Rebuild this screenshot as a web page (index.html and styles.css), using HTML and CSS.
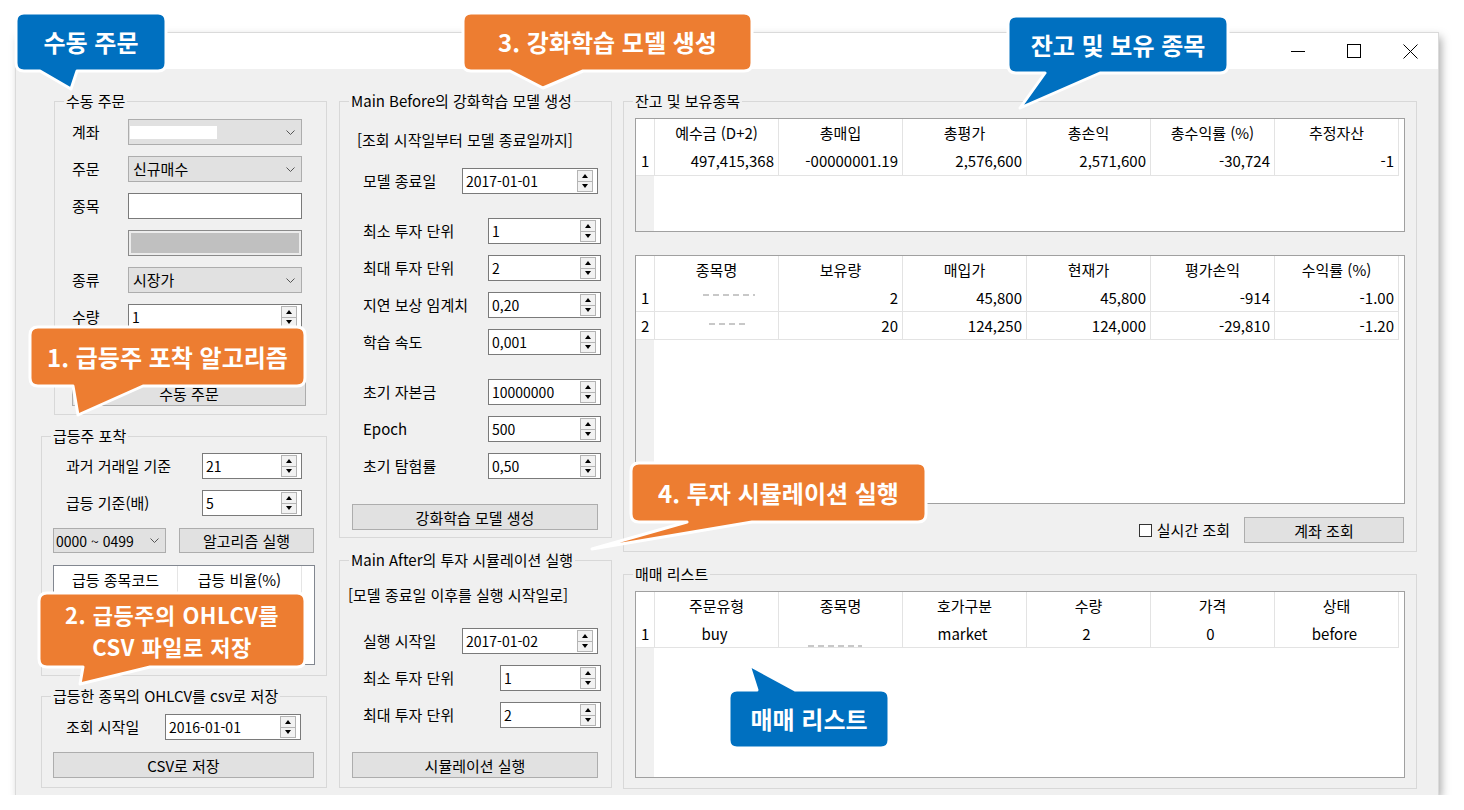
FILE: index.html
```html
<!DOCTYPE html>
<html lang="ko">
<head>
<meta charset="UTF-8">
<title>주식 자동매매</title>
<link rel="stylesheet" href="styles.css">
</head>
<body>
<div class="window">
  <div class="titlebar">
    <span class="tb-btn"><svg width="14" height="14" viewBox="0 0 14 14"><path d="M0 7.5H14" stroke="#000"/></svg></span>
    <span class="tb-btn"><svg width="14" height="14" viewBox="0 0 14 14"><rect x="0.5" y="0.5" width="13" height="13" fill="none" stroke="#000"/></svg></span>
    <span class="tb-btn"><svg width="15" height="15" viewBox="0 0 15 15"><path d="M0.5 0.5L14.5 14.5M14.5 0.5L0.5 14.5" stroke="#000"/></svg></span>
  </div>
  <div class="client">
    <!-- left column -->
    <div class="col col-left">
      <fieldset class="group g-order">
        <legend>수동 주문</legend>
        <div class="gbody">
          <div class="frow"><span class="lbl">계좌</span><div class="combo"><span class="mask"></span><svg class="chev" width="9" height="5" viewBox="0 0 9 5"><path d="M0.5 0.5L4.5 4.5L8.5 0.5" fill="none" stroke="#555"/></svg></div></div>
          <div class="frow"><span class="lbl">주문</span><div class="combo"><span class="val">신규매수</span><svg class="chev" width="9" height="5" viewBox="0 0 9 5"><path d="M0.5 0.5L4.5 4.5L8.5 0.5" fill="none" stroke="#555"/></svg></div></div>
          <div class="frow"><span class="lbl">종목</span><div class="textbox"></div></div>
          <div class="frow"><span class="lbl"></span><div class="textbox disabled"></div></div>
          <div class="frow"><span class="lbl">종류</span><div class="combo"><span class="val">시장가</span><svg class="chev" width="9" height="5" viewBox="0 0 9 5"><path d="M0.5 0.5L4.5 4.5L8.5 0.5" fill="none" stroke="#555"/></svg></div></div>
          <div class="frow"><span class="lbl">수량</span><div class="numeric"><span class="val">1</span><span class="spin"><i class="up"></i><i class="down"></i></span></div></div>
          <button class="btn btn-order">수동 주문</button>
        </div>
      </fieldset>

      <fieldset class="group g-surge">
        <legend>급등주 포착</legend>
        <div class="gbody">
          <div class="frow indent"><span class="lbl">과거 거래일 기준</span><div class="numeric"><span class="val">21</span><span class="spin"><i class="up"></i><i class="down"></i></span></div></div>
          <div class="frow indent"><span class="lbl">급등 기준(배)</span><div class="numeric"><span class="val">5</span><span class="spin"><i class="up"></i><i class="down"></i></span></div></div>
          <div class="surge-tools">
            <div class="combo range"><span class="val">0000 ~ 0499</span><svg class="chev" width="9" height="5" viewBox="0 0 9 5"><path d="M0.5 0.5L4.5 4.5L8.5 0.5" fill="none" stroke="#555"/></svg></div>
            <button class="btn btn-run">알고리즘 실행</button>
          </div>
          <div class="listview">
            <div class="lv-head"><span>급등 종목코드</span><span>급등 비율(%)</span></div>
          </div>
        </div>
      </fieldset>

      <fieldset class="group g-csv">
        <legend>급등한 종목의 OHLCV를 csv로 저장</legend>
        <div class="gbody">
          <div class="frow"><span class="lbl">조회 시작일</span><div class="numeric datebox"><span class="val">2016-01-01</span><span class="spin"><i class="up"></i><i class="down"></i></span></div></div>
          <button class="btn btn-wide">CSV로 저장</button>
        </div>
      </fieldset>
    </div>

    <!-- middle column -->
    <div class="col col-mid">
      <fieldset class="group g-model">
        <legend>Main Before의 강화학습 모델 생성</legend>
        <div class="gbody">
          <div class="note">[조회 시작일부터 모델 종료일까지]</div>
          <div class="frow param"><span class="lbl">모델 종료일</span><div class="numeric datebox"><span class="val">2017-01-01</span><span class="spin"><i class="up"></i><i class="down"></i></span></div></div>
          <div class="frow param sep"><span class="lbl">최소 투자 단위</span><div class="numeric"><span class="val">1</span><span class="spin"><i class="up"></i><i class="down"></i></span></div></div>
          <div class="frow param"><span class="lbl">최대 투자 단위</span><div class="numeric"><span class="val">2</span><span class="spin"><i class="up"></i><i class="down"></i></span></div></div>
          <div class="frow param"><span class="lbl">지연 보상 임계치</span><div class="numeric"><span class="val">0,20</span><span class="spin"><i class="up"></i><i class="down"></i></span></div></div>
          <div class="frow param"><span class="lbl">학습 속도</span><div class="numeric"><span class="val">0,001</span><span class="spin"><i class="up"></i><i class="down"></i></span></div></div>
          <div class="frow param sep"><span class="lbl">초기 자본금</span><div class="numeric"><span class="val">10000000</span><span class="spin"><i class="up"></i><i class="down"></i></span></div></div>
          <div class="frow param"><span class="lbl">Epoch</span><div class="numeric"><span class="val">500</span><span class="spin"><i class="up"></i><i class="down"></i></span></div></div>
          <div class="frow param"><span class="lbl">초기 탐험률</span><div class="numeric"><span class="val">0,50</span><span class="spin"><i class="up"></i><i class="down"></i></span></div></div>
          <button class="btn btn-mid btn-model">강화학습 모델 생성</button>
        </div>
      </fieldset>

      <fieldset class="group g-sim">
        <legend>Main After의 투자 시뮬레이션 실행</legend>
        <div class="gbody">
          <div class="note">[모델 종료일 이후를 실행 시작일로]</div>
          <div class="frow param"><span class="lbl">실행 시작일</span><div class="numeric datebox"><span class="val">2017-01-02</span><span class="spin"><i class="up"></i><i class="down"></i></span></div></div>
          <div class="frow param"><span class="lbl">최소 투자 단위</span><div class="numeric"><span class="val">1</span><span class="spin"><i class="up"></i><i class="down"></i></span></div></div>
          <div class="frow param"><span class="lbl">최대 투자 단위</span><div class="numeric"><span class="val">2</span><span class="spin"><i class="up"></i><i class="down"></i></span></div></div>
          <button class="btn btn-mid btn-sim">시뮬레이션 실행</button>
        </div>
      </fieldset>
    </div>

    <!-- right column -->
    <div class="col col-right">
      <fieldset class="group g-balance">
        <legend>잔고 및 보유종목</legend>
        <div class="gbody">
          <div class="grid grid-summary">
            <table>
              <colgroup><col class="c-rh"><col class="c-col"><col class="c-col"><col class="c-col"><col class="c-col"><col class="c-col"><col class="c-col"></colgroup>
              <thead><tr><th></th><th>예수금 (D+2)</th><th>총매입</th><th>총평가</th><th>총손익</th><th>총수익률 (%)</th><th>추정자산</th></tr></thead>
              <tbody><tr><td class="rh">1</td><td>497,415,368</td><td>-00000001.19</td><td>2,576,600</td><td>2,571,600</td><td>-30,724</td><td>-1</td></tr></tbody>
            </table>
          </div>
          <div class="grid grid-holdings">
            <table>
              <colgroup><col class="c-rh"><col class="c-col"><col class="c-col"><col class="c-col"><col class="c-col"><col class="c-col"><col class="c-col"></colgroup>
              <thead><tr><th></th><th>종목명</th><th>보유량</th><th>매입가</th><th>현재가</th><th>평가손익</th><th>수익률 (%)</th></tr></thead>
              <tbody>
                <tr><td class="rh">1</td><td class="name"><span class="blur b1"></span></td><td>2</td><td>45,800</td><td>45,800</td><td>-914</td><td>-1.00</td></tr>
                <tr><td class="rh">2</td><td class="name"><span class="blur b2"></span></td><td>20</td><td>124,250</td><td>124,000</td><td>-29,810</td><td>-1.20</td></tr>
              </tbody>
            </table>
          </div>
          <div class="acct-bar">
            <span class="chk"></span><span class="chk-label">실시간 조회</span>
            <button class="btn btn-acct">계좌 조회</button>
          </div>
        </div>
      </fieldset>

      <fieldset class="group g-trades">
        <legend>매매 리스트</legend>
        <div class="gbody">
          <div class="grid grid-trades">
            <table class="centered">
              <colgroup><col class="c-rh"><col class="c-col"><col class="c-col"><col class="c-col"><col class="c-col"><col class="c-col"><col class="c-col"></colgroup>
              <thead><tr><th></th><th>주문유형</th><th>종목명</th><th>호가구분</th><th>수량</th><th>가격</th><th>상태</th></tr></thead>
              <tbody><tr><td class="rh">1</td><td>buy</td><td class="name"><span class="blur b3"></span></td><td>market</td><td>2</td><td>0</td><td>before</td></tr></tbody>
            </table>
          </div>
        </div>
      </fieldset>
    </div>
  </div>
</div>

<!-- annotation callouts -->
<svg class="callouts" width="1464" height="810" viewBox="0 0 1464 810">
  <g stroke="#fff" stroke-width="3" stroke-linejoin="round">
    <path fill="#0070c0" d="M24,13 H158 Q166,13 166,21 V63 Q166,71 158,71 H77 L71,89 L40,71 H24 Q16,71 16,63 V21 Q16,13 24,13 Z"/>
    <path fill="#ed7d31" d="M471,13 H744 Q752,13 752,21 V63 Q752,71 744,71 H583 L543,88 L510,71 H471 Q463,71 463,63 V21 Q463,13 471,13 Z"/>
    <path fill="#0070c0" d="M1016,16 H1220 Q1228,16 1228,24 V65 Q1228,73 1220,73 H1100 L1020,108 L1045,73 H1016 Q1008,73 1008,65 V24 Q1008,16 1016,16 Z"/>
    <path fill="#ed7d31" d="M38,327 H297 Q305,327 305,335 V378 Q305,386 297,386 H143 L78,415 L73,386 H38 Q30,386 30,378 V335 Q30,327 38,327 Z"/>
    <path fill="#ed7d31" d="M47,593 H297 Q305,593 305,601 V659 Q305,667 297,667 H150 L80,684 L83,667 H47 Q39,667 39,659 V601 Q39,593 47,593 Z"/>
    <path fill="#ed7d31" d="M639,463 H918 Q926,463 926,471 V514 Q926,522 918,522 H752 L592,549 L687,522 H639 Q631,522 631,514 V471 Q631,463 639,463 Z"/>
    <path fill="#0070c0" d="M737,690 H757 L749,665 L795,690 H881 Q889,690 889,698 V740 Q889,748 881,748 H737 Q729,748 729,740 V698 Q729,690 737,690 Z"/>
  </g>
</svg>
<div class="callout co-order">수동 주문</div>
<div class="callout co-model">3. 강화학습 모델 생성</div>
<div class="callout co-balance">잔고 및 보유 종목</div>
<div class="callout co-surge">1. 급등주 포착 알고리즘</div>
<div class="callout co-csv">2. 급등주의 OHLCV를<br>CSV 파일로 저장</div>
<div class="callout co-sim">4. 투자 시뮬레이션 실행</div>
<div class="callout co-trades">매매 리스트</div>
</body>
</html>
```

FILE: styles.css
```css
* {
  box-sizing: border-box;
}
body {
  margin: 0;
  background: #fff;
  font-family: "Noto Sans CJK KR", "Noto Sans", sans-serif;
  font-size: 15px;
  line-height: 18px;
  color: #000;
}
.window {
  margin: 33px 0 0 16px;
  width: 1422px;
  height: 762px;
  background: #f0f0f0;
  box-shadow: 0 0 0 1px #dadada, 3px 4px 9px rgba(0, 0, 0, 0.35);
}
.titlebar {
  height: 36px;
  background: #fff;
  display: flex;
  justify-content: flex-end;
}
.tb-btn {
  width: 56px;
  display: flex;
  align-items: center;
  justify-content: center;
}
.client {
  display: flex;
  padding: 23px 0 0 25px;
}
.col {
  display: flex;
  flex-direction: column;
}
.col-left {
  width: 286px;
  margin-right: 12px;
}
.col-mid {
  width: 273px;
  margin-right: 11px;
}
.col-right {
  width: 794px;
}

/* group boxes */
.group {
  margin: 0;
  padding: 0;
  min-width: 0;
  border: 1px solid #d8d8d8;
}
.group legend {
  margin-left: 9px;
  padding: 0 2px;
  line-height: 18px;
}
.frow {
  display: flex;
  align-items: center;
  height: 26px;
  margin-bottom: 11px;
}
.frow .lbl {
  flex: 1;
  white-space: nowrap;
}

/* controls */
.combo,
.textbox,
.numeric {
  height: 26px;
  display: flex;
  align-items: center;
  font-size: 15px;
}
.combo {
  background: #e1e1e1;
  border: 1px solid #adadad;
}
.combo .val {
  flex: 1;
  padding-left: 4px;
}
.chev {
  margin: 0 6px 0 auto;
}
.mask {
  width: 87px;
  height: 13px;
  margin-left: 1px;
  background: #fff;
}
.textbox {
  background: #fff;
  border: 1px solid #7a7a7a;
}
.textbox.disabled {
  background: #c0c0c0;
  border-color: #8a8a8a;
  box-shadow: inset 0 0 0 2px #ececec;
}
.numeric {
  background: #fff;
  border: 1px solid #7a7a7a;
  font-size: 14px;
}
.numeric .val {
  flex: 1;
  padding-left: 3px;
}
.spin {
  width: 16px;
  height: 22px;
  margin-right: 4px;
  display: flex;
  flex-direction: column;
}
.spin i {
  flex: 1;
  display: flex;
  align-items: center;
  justify-content: center;
  background: #f2f2f2;
  border: 1px solid #b4b4b4;
}
.spin i + i {
  border-top: 0;
}
.spin .up::after {
  content: "";
  border-left: 3px solid transparent;
  border-right: 3px solid transparent;
  border-bottom: 4px solid #000;
}
.spin .down::after {
  content: "";
  border-left: 3px solid transparent;
  border-right: 3px solid transparent;
  border-top: 4px solid #000;
}
.btn {
  display: block;
  height: 26px;
  padding: 0;
  font-family: inherit;
  font-size: 15px;
  color: #000;
  background: #e1e1e1;
  border: 1px solid #adadad;
}

/* 수동 주문 */
.g-order {
  margin-left: 13px;
  width: 273px;
  height: 323px;
}
.g-order .gbody {
  padding: 9px 24px 0 17px;
}
.g-order .frow > :last-child {
  width: 174px;
}
.btn-order {
  margin-top: 50px;
  width: 234px;
}

/* 급등주 포착 */
.g-surge {
  margin-top: 12px;
  height: 249px;
}
.g-surge .gbody,
.g-csv .gbody {
  padding: 8px 12px 0 11px;
}
.frow.indent {
  padding: 0 12px 0 13px;
}
.g-surge .numeric {
  width: 100px;
}
.surge-tools {
  display: flex;
  justify-content: space-between;
  height: 25px;
  margin: 12px 0 12px;
}
.range {
  width: 113px;
  height: 25px;
  font-size: 14px;
}
.range .val {
  padding-left: 2px;
}
.btn-run {
  width: 135px;
  height: 25px;
}
.listview {
  width: 262px;
  height: 100px;
  background: #fff;
  border: 1px solid #828790;
}
.lv-head {
  display: flex;
  height: 28px;
}
.lv-head span {
  width: 124px;
  display: flex;
  align-items: center;
  justify-content: center;
  border-right: 1px solid #e5e5e5;
}

/* csv 저장 */
.g-csv {
  margin-top: 11px;
  height: 101px;
}
.g-csv .gbody {
  padding-top: 9px;
}
.g-csv .frow {
  padding: 0 13px;
}
.datebox {
  width: 136px;
}
.btn-wide {
  width: 100%;
  margin-top: 12px;
}

/* 강화학습 / 시뮬레이션 */
.g-model {
  height: 446px;
}
.g-sim {
  margin-top: 13px;
  height: 237px;
}
.g-model .gbody,
.g-sim .gbody {
  padding: 0 10px 0 12px;
}
.note {
  line-height: 20px;
  white-space: nowrap;
}
.g-model .note {
  margin: 20px 0 18px 5px;
}
.g-sim .note {
  margin: 16px 0 23px -4px;
}
.param {
  padding-left: 11px;
}
.param .numeric {
  width: 113px;
}
.g-sim .param .numeric {
  width: 101px;
}
.param .numeric.datebox {
  width: 136px;
  margin-right: 3px;
}
.frow.sep {
  margin-top: 24px;
}
.btn-mid {
  width: 246px;
}
.btn-model {
  margin-top: 25px;
}
.btn-sim {
  margin-top: 24px;
}

/* 잔고 / 매매 리스트 */
.g-balance {
  height: 460px;
}
.g-trades {
  margin-top: 13px;
  height: 224px;
}
.g-balance .gbody,
.g-trades .gbody {
  padding: 8px 11px 0;
}
.grid {
  border: 1px solid #a0a0a0;
  background: linear-gradient(90deg, #f0f0f0 18px, #fff 18px);
  overflow: hidden;
}
.grid-summary {
  height: 114px;
}
.grid-holdings {
  height: 249px;
  margin-top: 23px;
}
.grid-trades {
  height: 187px;
}
.grid table {
  table-layout: fixed;
  width: 763px;
  border-collapse: separate;
  border-spacing: 0;
  background: #fff;
}
.c-rh {
  width: 19px;
}
.c-col {
  width: 124px;
}
.grid th {
  height: 28px;
  padding: 0;
  font-weight: normal;
  text-align: center;
  border-right: 1px solid #e3e3e3;
}
.grid td {
  height: 28px;
  padding: 0 4px 0 0;
  text-align: right;
  white-space: nowrap;
  border-right: 1px solid #e3e3e3;
  border-bottom: 1px solid #e3e3e3;
}
.grid-summary td {
  height: 29px;
}
.grid td.rh {
  padding: 0 0 0 5px;
  text-align: left;
}
.grid td.name {
  text-align: center;
}
.centered td {
  text-align: center;
}
.blur {
  display: inline-block;
  height: 2px;
  background: repeating-linear-gradient(90deg, #c8c8c8 0 6px, transparent 6px 10px);
}
.b1 {
  width: 52px;
  transform: translate(14px, -8px);
}
.b2 {
  width: 40px;
  transform: translate(14px, -7px);
}
.b3 {
  width: 54px;
  transform: translate(-4px, 7px);
}
.acct-bar {
  display: flex;
  align-items: center;
  justify-content: flex-end;
  height: 26px;
  margin-top: 13px;
}
.chk {
  width: 13px;
  height: 13px;
  background: #fff;
  border: 1px solid #333;
}
.chk-label {
  margin-left: 5px;
}
.btn-acct {
  width: 160px;
  margin: 0 1px 0 14px;
}

/* callouts */
.callouts {
  position: absolute;
  left: 0;
  top: 0;
}
.callout {
  position: absolute;
  display: flex;
  align-items: center;
  justify-content: center;
  text-align: center;
  color: #fff;
  font-size: 24px;
  font-weight: 700;
  line-height: 30px;
  white-space: nowrap;
}
.co-order {
  left: 16px;
  top: 13px;
  width: 150px;
  height: 58px;
}
.co-model {
  left: 463px;
  top: 13px;
  width: 289px;
  height: 58px;
}
.co-balance {
  left: 1008px;
  top: 16px;
  width: 220px;
  height: 57px;
}
.co-surge {
  left: 30px;
  top: 327px;
  width: 275px;
  height: 59px;
}
.co-csv {
  left: 39px;
  top: 593px;
  width: 266px;
  height: 74px;
  font-size: 22px;
  letter-spacing: 0.5px;
  line-height: 32px;
}
.co-sim {
  left: 631px;
  top: 463px;
  width: 295px;
  height: 59px;
}
.co-trades {
  left: 729px;
  top: 690px;
  width: 160px;
  height: 58px;
}
```
